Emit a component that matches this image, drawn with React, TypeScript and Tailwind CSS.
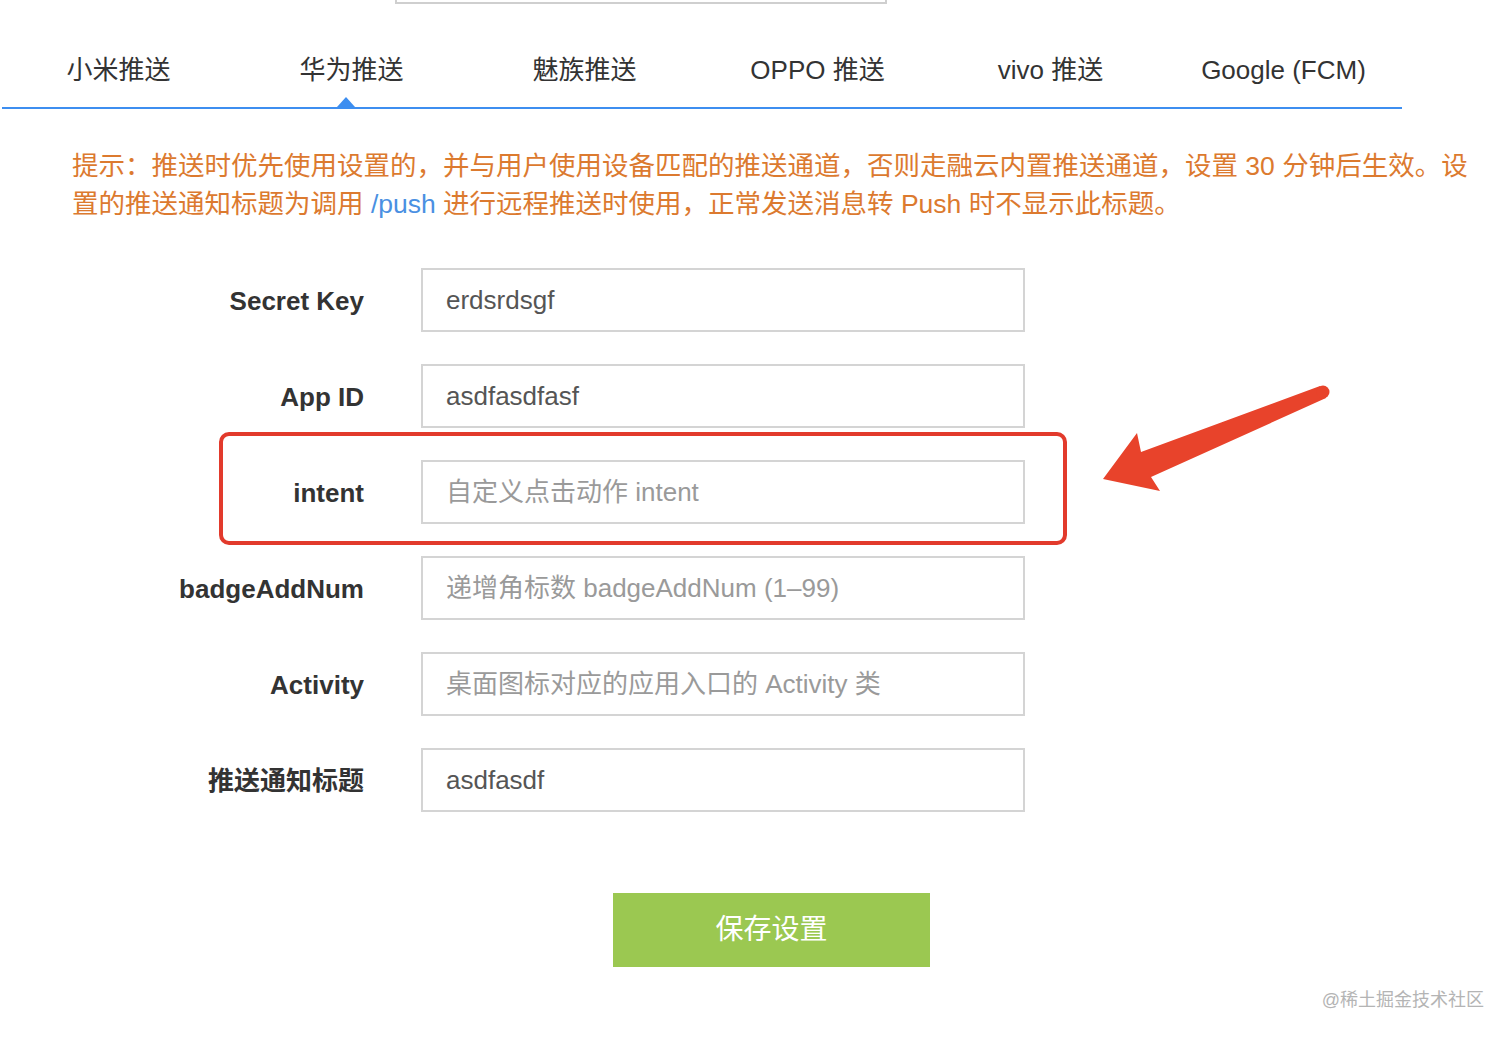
const tabs = ["小米推送", "华为推送", "魅族推送", "OPPO 推送", "vivo 推送", "Google (FCM)"];

type Field = {
  label: string;
  value?: string;
  placeholder?: string;
  highlight?: boolean;
};

const fields: Field[] = [
  { label: "Secret Key", value: "erdsrdsgf" },
  { label: "App ID", value: "asdfasdfasf" },
  { label: "intent", placeholder: "自定义点击动作 intent", highlight: true },
  { label: "badgeAddNum", placeholder: "递增角标数 badgeAddNum (1–99)" },
  { label: "Activity", placeholder: "桌面图标对应的应用入口的 Activity 类" },
  { label: "推送通知标题", value: "asdfasdf" },
];

function Arrow() {
  return (
    <svg
      className="absolute left-[1095px] top-[380px]"
      width="240"
      height="120"
      viewBox="0 0 240 120"
    >
      <polygon
        points="225,6 231,18 56,97 65,111 8,99 42,53 46,72"
        fill="#e8432b"
        strokeLinejoin="round"
      />
      <circle cx="228" cy="12" r="6.5" fill="#e8432b" />
    </svg>
  );
}

function FormRow({ field }: { field: Field }) {
  return (
    <div className="relative flex items-center h-[64px]">
      {field.highlight && (
        <div className="absolute left-[219px] top-[-28px] w-[848px] h-[113px] border-[4px] border-[#e23a2c] rounded-[10px]"></div>
      )}
      <label className="w-[364px] pt-[3px] text-right text-[26px] font-bold text-[#333]">
        {field.label}
      </label>
      <div className="ml-[57px] w-[604px] h-[64px] border-2 border-[#d4d4d4] bg-white flex items-center pl-[23px]">
        {field.value ? (
          <span className="text-[26px] text-[#555]">{field.value}</span>
        ) : (
          <span className="text-[26px] text-[#9a9a9a]">{field.placeholder}</span>
        )}
      </div>
    </div>
  );
}

export default function App() {
  return (
    <div
      className="relative w-[1512px] h-[1038px] bg-white overflow-hidden"
      style={{ fontFamily: '"Liberation Sans", "Noto Sans CJK SC", sans-serif' }}
    >
      <div className="ml-[395px] w-[492px] h-[4px] border-x-2 border-b-2 border-[#cfcfcf]"></div>

      {/* tabs */}
      <div className="ml-[2px] w-[1400px] flex pt-[46px] pb-[17px] border-b-2 border-[#3d8ef0]">
        {tabs.map((t, i) => (
          <div key={t} className="relative w-[233px] text-center text-[26px] leading-[40px] text-[#333]">
            {t}
            {i === 1 && (
              <div className="absolute left-[102px] bottom-[-17px] w-0 h-0 border-x-[9px] border-x-transparent border-b-[10px] border-b-[#3d8ef0]"></div>
            )}
          </div>
        ))}
      </div>

      {/* hint */}
      <div className="mt-[38px] ml-[72px] text-[26.5px] leading-[38px] text-[#dc7a2f] whitespace-nowrap">
        <div>提示：推送时优先使用设置的，并与用户使用设备匹配的推送通道，否则走融云内置推送通道，设置 30 分钟后生效。设</div>
        <div>
          置的推送通知标题为调用 <span className="text-[#4a90e2]">/push</span> 进行远程推送时使用，正常发送消息转 Push 时不显示此标题。
        </div>
      </div>

      {/* form */}
      <div className="mt-[45px] flex flex-col gap-[32px]">
        {fields.map((f) => (
          <FormRow key={f.label} field={f} />
        ))}
      </div>

      <div className="mt-[81px] ml-[613px] w-[317px] h-[74px] bg-[#9bc851] flex items-center justify-center text-white text-[28px]">
        保存设置
      </div>

      <div className="mt-[21px] flex justify-end pr-[28px] text-[18px] leading-[24px] text-[#b4b4b4]">
        @稀土掘金技术社区
      </div>

      <Arrow />
    </div>
  );
}
